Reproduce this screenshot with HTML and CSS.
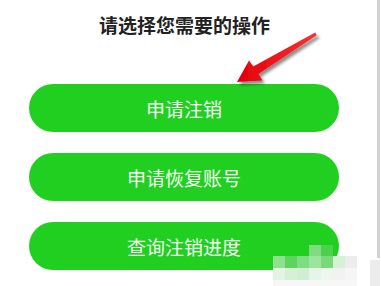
FILE: index.html
```html
<!DOCTYPE html>
<html lang="zh">
<head>
<meta charset="utf-8">
<link rel="stylesheet" href="styles.css">
</head>
<body>
<div class="page">
  <h1 class="title">请选择您需要的操作</h1>
  <div class="actions">
    <div class="btn">申请注销</div>
    <div class="btn">申请恢复账号</div>
    <div class="btn">查询注销进度</div>
  </div>
  <div class="scrollbar"></div>
  <svg class="arrow" width="381" height="120" viewBox="0 0 381 120">
    <defs>
      <filter id="sh" x="-20%" y="-20%" width="150%" height="150%">
        <feDropShadow dx="2.5" dy="3" stdDeviation="1.6" flood-color="#000" flood-opacity="0.45"/>
      </filter>
      <linearGradient id="rg" x1="0" y1="0" x2="1" y2="0">
        <stop offset="0" stop-color="#e0000a"/>
        <stop offset="1" stop-color="#ff3030"/>
      </linearGradient>
    </defs>
    <polygon filter="url(#sh)" fill="url(#rg)" points="237,82 249,60.5 253.2,66.6 315.2,32.6 316.8,35.2 258.4,74 262.5,80.5"/>
  </svg>
  <div class="mosaic">
    <i style="left:36px;top:0;background:#7fdc7f"></i>
    <i style="left:48px;top:0;background:#4dd14d"></i>
    <i style="left:0;top:11px;background:#8fe08f"></i>
    <i style="left:12px;top:11px;background:#5ed45e"></i>
    <i style="left:24px;top:11px;background:#80dc80"></i>
    <i style="left:36px;top:11px;background:#9de49d"></i>
    <i style="left:48px;top:11px;background:#7ad97a"></i>
    <i style="left:60px;top:11px;background:#d8efd8"></i>
    <i style="left:72px;top:11px;background:#ededed"></i>
    <i style="left:0;top:23px;background:#e2f4e2"></i>
    <i style="left:12px;top:23px;background:#d6f0d6"></i>
    <i style="left:24px;top:23px;background:#d0eed0"></i>
    <i style="left:36px;top:23px;background:#e6f6e6"></i>
    <i style="left:48px;top:23px;background:#eef6ee"></i>
    <i style="left:60px;top:23px;background:#f2f2f2"></i>
    <i style="left:72px;top:23px;background:#f5f5f5"></i>
  </div>
  <div class="grayblock"></div>
</div>
</body>
</html>
```

FILE: styles.css
```css
html, body {
  margin: 0;
  padding: 0;
  background: #ffffff;
}
.page {
  position: relative;
  width: 381px;
  height: 286px;
  overflow: hidden;
  font-family: "Noto Sans CJK SC", "Noto Sans", sans-serif;
}
.title {
  margin: 0;
  padding-top: 13px;
  height: 84px;
  box-sizing: border-box;
  text-align: center;
  font-size: 19px;
  line-height: 24px;
  font-weight: 700;
  color: #222222;
  padding-right: 12px;
}
.actions {
  display: flex;
  flex-direction: column;
  gap: 21px;
  margin-left: 29px;
  width: 310px;
}
.btn {
  height: 48px;
  border-radius: 24px;
  background: #21cf21;
  color: #f4fff4;
  font-size: 19px;
  display: flex;
  align-items: center;
  justify-content: center;
  letter-spacing: 0;
}
.scrollbar {
  position: absolute;
  left: 377px;
  top: 0;
  width: 3px;
  height: 258px;
  background: #d2d2d2;
}
.arrow {
  position: absolute;
  left: 0;
  top: 0;
}
.mosaic {
  position: absolute;
  left: 273px;
  top: 245px;
  width: 84px;
  height: 41px;
}
.mosaic::after {
  content: "";
  position: absolute;
  left: 0;
  top: 35px;
  width: 84px;
  height: 6px;
  background: #f7f7f7;
}
.mosaic i {
  position: absolute;
  width: 12px;
  height: 12px;
}
.grayblock {
  position: absolute;
  left: 370px;
  top: 260px;
  width: 10px;
  height: 26px;
  background: #ececec;
}
```
